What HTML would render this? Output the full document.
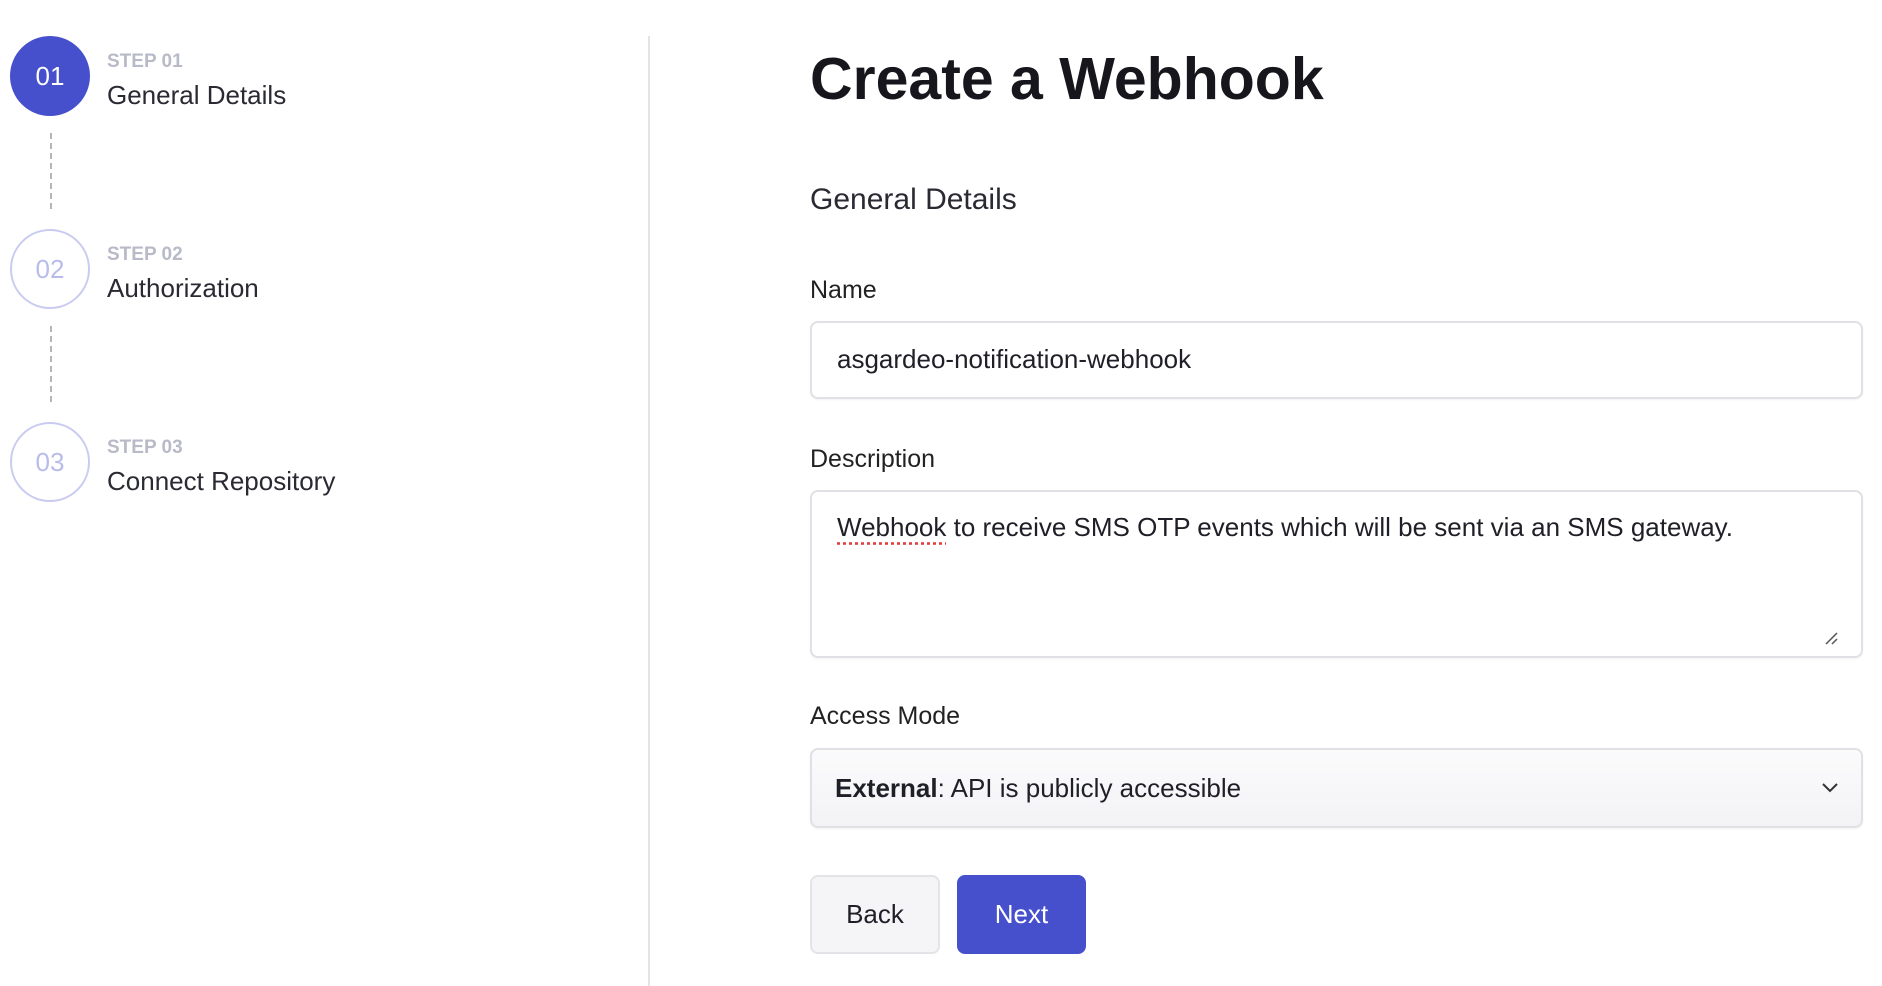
<!DOCTYPE html>
<html><head><meta charset="utf-8"><style>
*{box-sizing:border-box;margin:0;padding:0}
body{width:1882px;height:982px;background:#fff;font-family:"Liberation Sans",sans-serif;color:#1f1f27;position:relative;overflow:hidden}
.abs{position:absolute}
.circ{position:absolute;left:10px;width:80px;height:80px;border-radius:50%;display:flex;align-items:center;justify-content:center;font-size:26px}
.c1{background:#4650cc;color:#fff}
.co{border:2px solid #c9ccf0;color:#b8bcec;background:#fff}
.dash{position:absolute;left:50px;width:0;border-left:2px dashed #b5b5b5;height:76px}
.st{position:absolute;left:107px;font-size:19px;color:#b8bac8;font-weight:bold}
.sn{position:absolute;left:107px;font-size:26px;color:#2a2a33}
.lbl{position:absolute;left:810px;font-size:25px;color:#222}
.box{position:absolute;left:810px;width:1053px;border:2px solid #e0e0e6;border-radius:8px;background:#fff;box-shadow:0 1px 2px rgba(0,0,0,.05)}
</style></head><body>
<div class="circ c1" style="top:36px">01</div>
<div class="dash" style="top:133px"></div>
<div class="circ co" style="top:229px">02</div>
<div class="dash" style="top:326px"></div>
<div class="circ co" style="top:422px">03</div>
<div class="st" style="top:51px">STEP 01</div>
<div class="sn" style="top:80px">General Details</div>
<div class="st" style="top:244px">STEP 02</div>
<div class="sn" style="top:273px">Authorization</div>
<div class="st" style="top:437px">STEP 03</div>
<div class="sn" style="top:466px">Connect Repository</div>
<div class="abs" style="left:648px;top:36px;width:2px;height:950px;background:#e3e3e8"></div>
<div class="abs" style="left:810px;top:45px;font-size:59px;font-weight:bold;color:#16161c">Create a Webhook</div>
<div class="abs" style="left:810px;top:183px;font-size:30px;color:#2a2a33">General Details</div>
<div class="lbl" style="top:276px">Name</div>
<div class="box" style="top:321px;height:78px;padding:21px 0 0 25px;font-size:26px">asgardeo-notification-webhook</div>
<div class="lbl" style="top:445px">Description</div>
<div class="box" style="top:490px;height:168px;padding:20px 0 0 25px;font-size:26px"><span style="text-decoration:underline dotted #e04040;text-underline-offset:6px">Webhook</span> to receive SMS OTP events which will be sent via an SMS gateway.
<svg class="abs" style="right:22px;bottom:10px" width="16" height="16"><path d="M14 3L3 14M14 9L9 14" stroke="#555" stroke-width="1.5"/></svg></div>
<div class="lbl" style="top:702px">Access Mode</div>
<div class="box" style="top:748px;height:80px;padding:23px 0 0 23px;font-size:26px;background:linear-gradient(#fbfbfc,#f3f3f6)"><b>External</b>: API is publicly accessible
<svg class="abs" style="right:22px;top:32px" width="18" height="12"><path d="M2 2L9 9L16 2" stroke="#333" stroke-width="2" fill="none"/></svg></div>
<div class="abs" style="left:810px;top:875px;width:130px;height:79px;border:2px solid #e3e3e8;border-radius:8px;background:#f5f5f7;display:flex;align-items:center;justify-content:center;font-size:26px">Back</div>
<div class="abs" style="left:957px;top:875px;width:129px;height:79px;border-radius:8px;background:#4650cc;color:#fff;display:flex;align-items:center;justify-content:center;font-size:26px">Next</div>
</body></html>
